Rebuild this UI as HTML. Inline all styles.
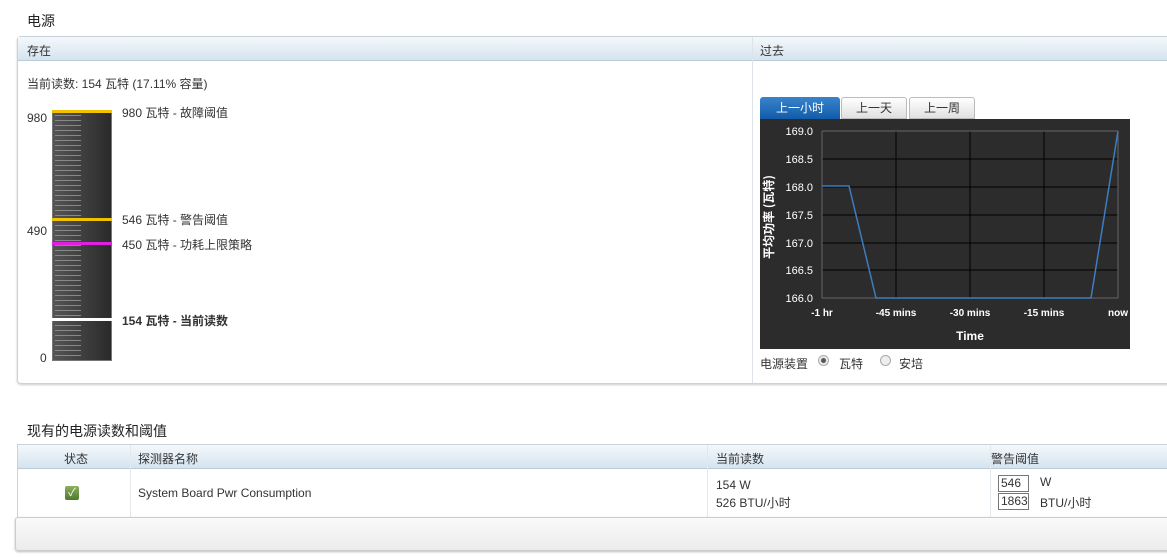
<!DOCTYPE html>
<html><head><meta charset="utf-8"><style>
*{margin:0;padding:0;box-sizing:border-box}
body{width:1167px;height:557px;background:#fff;font-family:"Liberation Sans","Noto Sans CJK SC",sans-serif;font-size:12px;color:#333;position:relative;overflow:hidden}
.a{position:absolute;white-space:nowrap}
.hdr{background:linear-gradient(#f4f8fb,#d5e4ef);border-bottom:1px solid #b9cbd8}
</style></head><body>
<div class="a" style="left:27px;top:11px;font-size:14px;color:#222">电源</div>
<div class="a" style="left:17px;top:36px;width:1160px;height:348px;border:1px solid #c8d3db;border-radius:4px 0 0 4px;box-shadow:0 1px 2px #ccc"></div>
<div class="a hdr" style="left:18px;top:37px;width:1149px;height:24px"></div>
<div class="a" style="left:752px;top:37px;width:1px;height:346px;background:#dde3e8"></div>
<div class="a" style="left:27px;top:42px">存在</div>
<div class="a" style="left:760px;top:42px">过去</div>
<div class="a" style="left:27px;top:75px">当前读数: 154 瓦特 (17.11% 容量)</div>
<div class="a" style="left:52px;top:110px;width:60px;height:251px;border:1px solid #777;
background-image:repeating-linear-gradient(180deg,transparent 0 4px,#888 4px 5px),linear-gradient(90deg,#555,#2a2a2a);background-size:26px 100%,100% 100%;background-repeat:no-repeat;background-position:2px 0,0 0"></div>
<div class="a" style="left:52px;top:110px;width:60px;height:3px;background:#f2c200"></div>
<div class="a" style="left:52px;top:218px;width:60px;height:3px;background:#f2c200"></div>
<div class="a" style="left:52px;top:242px;width:60px;height:3px;background:#e020e0"></div>
<div class="a" style="left:52px;top:318px;width:60px;height:3px;background:#fff"></div>
<div class="a" style="left:27px;top:111px">980</div>
<div class="a" style="left:27px;top:224px">490</div>
<div class="a" style="left:40px;top:351px">0</div>
<div class="a" style="left:122px;top:104px">980 瓦特 - 故障阈值</div>
<div class="a" style="left:122px;top:211px">546 瓦特 - 警告阈值</div>
<div class="a" style="left:122px;top:236px">450 瓦特 - 功耗上限策略</div>
<div class="a" style="left:122px;top:312px;font-weight:bold">154 瓦特 - 当前读数</div>
<div class="a" style="left:760px;top:97px;width:80px;height:23px;background:linear-gradient(#3a83cc,#0f5aa8);color:#fff;border-radius:3px 3px 0 0;text-align:center;line-height:22px">上一小时</div>
<div class="a" style="left:841px;top:97px;width:66px;height:22px;background:linear-gradient(#fff,#e0e0e0);border:1px solid #bbb;border-radius:3px 3px 0 0;text-align:center;line-height:20px">上一天</div>
<div class="a" style="left:909px;top:97px;width:66px;height:22px;background:linear-gradient(#fff,#e0e0e0);border:1px solid #bbb;border-radius:3px 3px 0 0;text-align:center;line-height:20px">上一周</div>
<svg class="a" style="left:760px;top:119px" width="370" height="230">
<rect width="370" height="230" fill="#2b2c2b"/>
<g stroke="#000" stroke-width="1">
<line x1="62" y1="12" x2="358" y2="12"/><line x1="62" y1="40" x2="358" y2="40"/><line x1="62" y1="68" x2="358" y2="68"/><line x1="62" y1="96" x2="358" y2="96"/><line x1="62" y1="124" x2="358" y2="124"/><line x1="62" y1="151" x2="358" y2="151"/>
<line x1="136" y1="12" x2="136" y2="179"/><line x1="210" y1="12" x2="210" y2="179"/><line x1="284" y1="12" x2="284" y2="179"/></g>
<g stroke="#666"><line x1="62" y1="12" x2="62" y2="179"/><line x1="62" y1="179" x2="358" y2="179"/><line x1="358" y1="12" x2="358" y2="179"/><line x1="62" y1="12" x2="358" y2="12"/></g>
<polyline points="62,67 89,67 116,179 331,179 358,12" fill="none" stroke="#3f7cbf" stroke-width="1.5"/>
<g fill="#fff" font-size="11" font-family="Liberation Sans,sans-serif" text-anchor="end">
<text x="53" y="16">169.0</text><text x="53" y="44">168.5</text><text x="53" y="72">168.0</text><text x="53" y="100">167.5</text><text x="53" y="128">167.0</text><text x="53" y="155">166.5</text><text x="53" y="183">166.0</text></g>
<g fill="#fff" font-size="10" font-weight="bold" font-family="Liberation Sans,sans-serif" text-anchor="middle">
<text x="62" y="197">-1 hr</text><text x="136" y="197">-45 mins</text><text x="210" y="197">-30 mins</text><text x="284" y="197">-15 mins</text><text x="358" y="197">now</text>
<text x="210" y="221" font-size="12">Time</text></g>
<text transform="translate(13,98) rotate(-90)" fill="#fff" font-size="12" font-weight="bold" text-anchor="middle" font-family="Noto Sans CJK SC,sans-serif">平均功率 (瓦特)</text>
</svg>
<div class="a" style="left:760px;top:355px">电源装置</div>
<div class="a" style="left:818px;top:355px;width:11px;height:11px;border-radius:50%;border:1px solid #aaa;background:radial-gradient(#555 2px,#eee 3px)"></div>
<div class="a" style="left:839px;top:355px">瓦特</div>
<div class="a" style="left:880px;top:355px;width:11px;height:11px;border-radius:50%;border:1px solid #aaa;background:#eee"></div>
<div class="a" style="left:899px;top:355px">安培</div>
<div class="a" style="left:27px;top:421px;font-size:14px;color:#222">现有的电源读数和阈值</div>
<div class="a" style="left:17px;top:444px;width:1160px;height:74px;border:1px solid #c8d3db"></div>
<div class="a hdr" style="left:18px;top:445px;width:1149px;height:24px"></div>
<div class="a" style="left:130px;top:445px;width:1px;height:72px;background:#e3e8ec"></div>
<div class="a" style="left:707px;top:445px;width:1px;height:72px;background:#e3e8ec"></div>
<div class="a" style="left:990px;top:445px;width:1px;height:72px;background:#e3e8ec"></div>
<div class="a" style="left:64px;top:450px">状态</div>
<div class="a" style="left:138px;top:450px">探测器名称</div>
<div class="a" style="left:716px;top:450px">当前读数</div>
<div class="a" style="left:991px;top:450px">警告阈值</div>
<div class="a" style="left:65px;top:486px;width:14px;height:14px;background:linear-gradient(#8bb060,#4f7a2a);border-radius:2px;color:#fff;font-size:11px;line-height:14px;text-align:center">✓</div>
<div class="a" style="left:138px;top:486px">System Board Pwr Consumption</div>
<div class="a" style="left:716px;top:478px">154 W</div>
<div class="a" style="left:716px;top:494px">526 BTU/小时</div>
<div class="a" style="left:998px;top:475px;width:31px;height:17px;border:1px solid #777;padding-left:2px;line-height:15px">546</div>
<div class="a" style="left:998px;top:493px;width:31px;height:17px;border:1px solid #777;padding-left:2px;line-height:15px">1863</div>
<div class="a" style="left:1040px;top:475px">W</div>
<div class="a" style="left:1040px;top:494px">BTU/小时</div>
<div class="a" style="left:15px;top:517px;width:1160px;height:34px;border:1px solid #ccc;border-radius:3px;background:linear-gradient(#fafafa,#ececec);box-shadow:0 1px 2px #bbb"></div>
</body></html>
